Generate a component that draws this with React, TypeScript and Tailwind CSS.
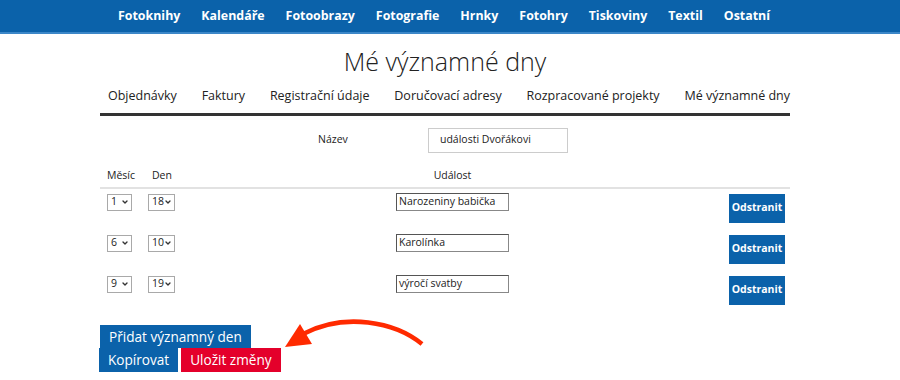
import { ChevronDown } from 'lucide-react';

const navItems = ['Fotoknihy', 'Kalendáře', 'Fotoobrazy', 'Fotografie', 'Hrnky', 'Fotohry', 'Tiskoviny', 'Textil', 'Ostatní'];
const tabs = ['Objednávky', 'Faktury', 'Registrační údaje', 'Doručovací adresy', 'Rozpracované projekty', 'Mé významné dny'];
const rows = [
  { month: '1', day: '18', name: 'Narozeniny babička' },
  { month: '6', day: '10', name: 'Karolínka' },
  { month: '9', day: '19', name: 'výročí svatby' },
];

function FakeSelect({ value, width }: { value: string; width: string }) {
  return (
    <div className={`${width} h-[17px] border border-[#a9a9a9] bg-white flex items-center justify-between pl-[3px] pr-[2px] text-[10.5px] text-[#222]`}>
      <span>{value}</span>
      <ChevronDown className="w-[8px] h-[8px] text-[#333]" strokeWidth={4} />
    </div>
  );
}

export default function App() {
  return (
    <div className="w-[900px] h-[380px] bg-white overflow-hidden relative font-['Open_Sans',sans-serif] text-[#222]">
      {/* top menu */}
      <div className="h-[34px] bg-[#0b62aa] border-b-2 border-[#3c87c8] flex items-center justify-center gap-[21px] pr-[12px] text-white font-bold text-[12.4px]">
        {navItems.map((n) => (
          <span key={n}>{n}</span>
        ))}
      </div>

      <h1 className="text-center text-[25px] font-light leading-[36px] mt-[9px] pr-[10px] text-[#222]">Mé významné dny</h1>

      <div className="ml-[100px] w-[690px]">
        <div className="flex justify-between pl-[8px] mt-[8px] text-[12.5px] pb-[7px] border-b-[3px] border-[#333]">
          {tabs.map((t) => (
            <span key={t}>{t}</span>
          ))}
        </div>

        <div className="flex items-center mt-[12px] h-[25px]">
          <span className="ml-[218px] w-[110px] text-[10.5px]">Název</span>
          <div className="w-[140px] h-[25px] border border-[#ccc] flex items-center pl-[11px] text-[10.5px]">události Dvořákovi</div>
        </div>

        <div className="flex items-center mt-[15px] text-[10.5px] pb-[3px] border-b-2 border-[#e2e2e2]">
          <span className="ml-[7px] w-[45px]">Měsíc</span>
          <span className="w-[244px]">Den</span>
          <span className="w-[113px] text-center">Událost</span>
        </div>

        <div className="flex flex-col gap-[12px] mt-[4px]">
          {rows.map((r) => (
            <div key={r.name} className="flex items-start h-[29px]">
              <div className="ml-[7px] mt-[1px]">
                <FakeSelect value={r.month} width="w-[25px]" />
              </div>
              <div className="ml-[16px] mt-[1px]">
                <FakeSelect value={r.day} width="w-[27px]" />
              </div>
              <div className="ml-[221px] w-[113px] h-[18px] border border-[#888] border-t-[#555] border-l-[#555] flex items-center pl-[2px] text-[10.5px]">
                {r.name}
              </div>
              <button className="ml-auto mr-[5px] mt-[1px] w-[56px] h-[29px] bg-[#0b62aa] text-white font-bold text-[10.5px]">Odstranit</button>
            </div>
          ))}
        </div>

        <div className="mt-[21px] flex flex-col items-start text-[13.6px] text-white">
          <button className="bg-[#0b62aa] h-[23px] px-[9px] leading-[23px]">Přidat významný den</button>
          <div className="flex gap-[3px]">
            <button className="bg-[#0b62aa] h-[24px] px-[9px] leading-[24px] -ml-[1px]">Kopírovat</button>
            <button className="bg-[#e4002b] h-[24px] px-[9px] leading-[24px]">Uložit změny</button>
          </div>
        </div>
      </div>

      {/* annotation arrow */}
      <svg className="absolute left-0 top-0" width="900" height="380" viewBox="0 0 900 380">
        <path d="M422 344 C 395 322, 345 312, 303 334" fill="none" stroke="#ff2a00" strokeWidth="4.5" />
        <polygon points="285,347 300,324 312,344" fill="#ff2a00" />
      </svg>
    </div>
  );
}
